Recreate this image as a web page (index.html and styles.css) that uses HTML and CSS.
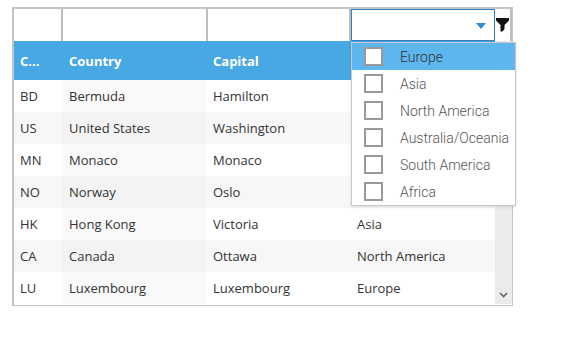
FILE: index.html
```html
<!DOCTYPE html>
<html lang="en">
<head>
    <meta charset="UTF-8">
    <title>Country Grid</title>
    <link rel="stylesheet" href="styles.css">
</head>
<body>
    <div class="grid">
        <div class="filter-row">
            <div class="filter-cell col-code"></div>
            <div class="filter-cell col-country"></div>
            <div class="filter-cell col-capital"></div>
            <div class="filter-input">
                <svg class="caret" width="10" height="6" viewBox="0 0 10 6"><path d="M0 0h10L5 6z" fill="#2d8ad6"/></svg>
            </div>
            <div class="filter-btn">
                <svg width="13" height="14" viewBox="0 0 13 14"><path d="M0 0h13v2.5L8.5 7v1.5h-4V7L0 2.5z M4.5 8.5h4v2.5L6.5 13.5H4.5z" fill="#111"/></svg>
            </div>
        </div>
        <div class="grid-body">
            <table class="data">
                <thead>
                    <tr>
                        <th class="col-code">C...</th>
                        <th class="col-country">Country</th>
                        <th class="col-capital">Capital</th>
                        <th class="col-continent"></th>
                    </tr>
                </thead>
                <tbody>
                    <tr><td>BD</td><td class="shade">Bermuda</td><td>Hamilton</td><td></td></tr>
                    <tr class="alt"><td>US</td><td class="shade">United States</td><td>Washington</td><td></td></tr>
                    <tr><td>MN</td><td class="shade">Monaco</td><td>Monaco</td><td></td></tr>
                    <tr class="alt"><td>NO</td><td class="shade">Norway</td><td>Oslo</td><td></td></tr>
                    <tr><td>HK</td><td class="shade">Hong Kong</td><td>Victoria</td><td>Asia</td></tr>
                    <tr class="alt"><td>CA</td><td class="shade">Canada</td><td>Ottawa</td><td>North America</td></tr>
                    <tr><td>LU</td><td class="shade">Luxembourg</td><td>Luxembourg</td><td>Europe</td></tr>
                </tbody>
            </table>
            <div class="scrollbar">
                <svg class="down" width="9" height="6" viewBox="0 0 9 6"><path d="M1 1l3.5 3.5L8 1" fill="none" stroke="#666" stroke-width="1.6"/></svg>
            </div>
        </div>
        <ul class="dropdown">
            <li class="selected"><span class="check"></span>Europe</li>
            <li><span class="check"></span>Asia</li>
            <li><span class="check"></span>North America</li>
            <li><span class="check"></span>Australia/Oceania</li>
            <li><span class="check"></span>South America</li>
            <li><span class="check"></span>Africa</li>
        </ul>
    </div>
</body>
</html>
```

FILE: styles.css
```css
body {
    margin: 0;
    padding: 0;
    background: white;
    font-family: 'Open Sans', sans-serif;
    color: #333;
}
.grid {
    position: relative;
    width: 498px;
    margin: 7px 0 0 12px;
    border: 1px solid #c4c4c4;
    border-top-width: 2px;
    border-left-width: 2px;
}
.filter-row {
    display: flex;
    height: 32px;
    background: white;
}
.filter-cell {
    border-right: 2px solid #bdbdbd;
    box-sizing: border-box;
}
.col-code { width: 50px; }
.col-country { width: 145px; }
.col-capital { width: 144px; }
.col-continent { width: 144px; }
.filter-cell.col-code { width: 49px; }
.filter-input {
    width: 144px;
    box-sizing: border-box;
    border: 1px solid #2f80c8;
    display: flex;
    align-items: center;
    justify-content: flex-end;
    padding-right: 8px;
}
.caret {
    margin-top: 2px;
}
.filter-btn {
    width: 17px;
    box-sizing: border-box;
    border-right: 2px solid #bdbdbd;
    display: flex;
    justify-content: center;
    padding-top: 9px;
}
.grid-body {
    display: flex;
    padding-bottom: 1px;
}
.data {
    border-collapse: collapse;
    table-layout: fixed;
    width: 481px;
    font-size: 13px;
}
.data th {
    background: #47a8e3;
    color: white;
    font-weight: bold;
    text-align: left;
    height: 39px;
    padding: 0 6px;
    box-sizing: border-box;
}
.data th.col-code { width: 49px; }
.data th.col-country { width: 144px; }
.data td {
    height: 32px;
    padding: 0 6px;
    box-sizing: border-box;
    white-space: nowrap;
}
.data td.shade {
    background: #f9f9f9;
}
.data tr.alt td {
    background: #f7f7f7;
}
.data tr.alt td.shade {
    background: #f3f3f3;
}
.scrollbar {
    width: 17px;
    background: #ebebeb;
    display: flex;
    align-items: flex-end;
    justify-content: center;
    padding-bottom: 6px;
    box-sizing: border-box;
}
.dropdown {
    position: absolute;
    left: 337px;
    top: 33px;
    width: 163px;
    margin: 0;
    padding: 0;
    list-style: none;
    background: white;
    border: 1px solid #c8c8c8;
    box-shadow: 0 1px 3px rgba(0, 0, 0, 0.12);
    font-family: Roboto, sans-serif;
    font-weight: 300;
    font-size: 14px;
    color: #555;
}
.dropdown li {
    display: flex;
    align-items: center;
    height: 27px;
    padding-left: 12px;
}
.dropdown li.selected {
    background: #5db7ee;
    color: #333;
}
.check {
    width: 19px;
    height: 19px;
    box-sizing: border-box;
    border: 2px solid #999;
    background: white;
    margin-right: 17px;
}
```
